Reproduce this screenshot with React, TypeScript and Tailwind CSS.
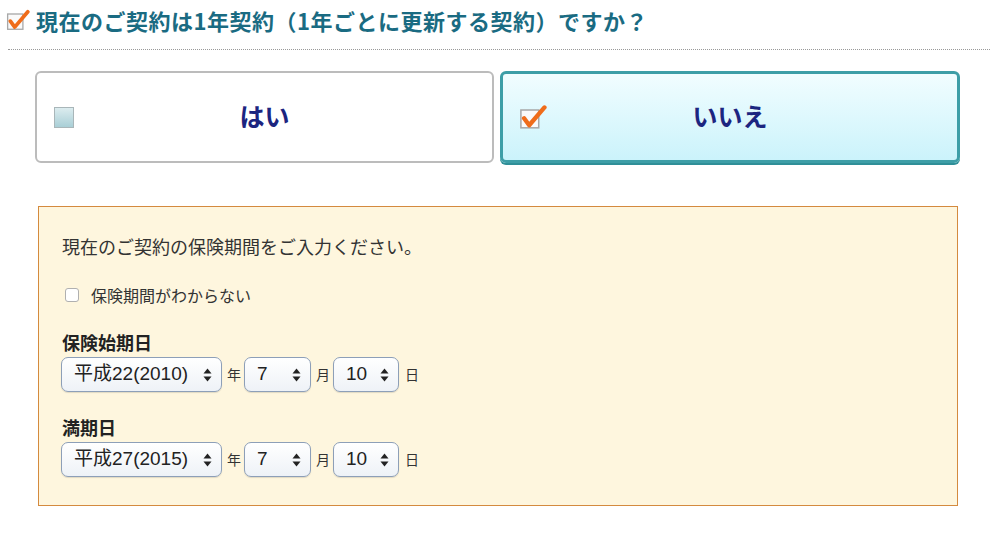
import React from 'react';

const JP = { fontFamily: '"Noto Sans CJK JP", "Noto Sans", sans-serif' };
const MIX = { fontFamily: '"Liberation Sans", "Noto Sans CJK JP", sans-serif' };

function CheckedIcon({ size = 22 }: { size?: number }) {
  return (
    <svg width={size} height={size} viewBox="0 0 22 22">
      <rect x="1.5" y="5.5" width="14" height="14" fill="#fafafa" stroke="#a8a8a8" strokeWidth="1.2" />
      <path d="M4 12 L8 17.5 L20 3.5" fill="none" stroke="#ef6c1a" strokeWidth="3.4" strokeLinecap="round" strokeLinejoin="round" />
    </svg>
  );
}

function SelectBox({ value, width }: { value: string; width: string }) {
  return (
    <div
      className={`${width} h-[35px] flex items-center justify-between pl-[12px] pr-[9px] rounded-[7px] border border-[#8d9fb8] bg-gradient-to-b from-white to-[#eef2f7] shadow-[0_1px_1px_rgba(0,0,0,0.12)]`}
    >
      <span className="text-[19px] text-[#222]" style={MIX}>{value}</span>
      <svg width="9" height="14" viewBox="0 0 9 14">
        <path d="M4.5 0.5 L8.5 5.5 L0.5 5.5 Z" fill="#222" />
        <path d="M4.5 13.5 L8.5 8.5 L0.5 8.5 Z" fill="#222" />
      </svg>
    </div>
  );
}

function DateRow({ era, month, day }: { era: string; month: string; day: string }) {
  return (
    <div className="flex items-center h-[35px]">
      <SelectBox value={era} width="w-[161px]" />
      <span className="ml-[5px] mr-[3px] text-[14px] text-[#333]" style={JP}>年</span>
      <SelectBox value={month} width="w-[67px]" />
      <span className="ml-[5px] mr-[3px] text-[14px] text-[#333]" style={JP}>月</span>
      <SelectBox value={day} width="w-[66px]" />
      <span className="ml-[6px] text-[14px] text-[#333]" style={JP}>日</span>
    </div>
  );
}

export default function App() {
  return (
    <div className="w-[998px] h-[534px] bg-white overflow-hidden" style={JP}>
      <div className="flex items-center h-[40px] pl-[6px]">
        <CheckedIcon size={24} />
        <h1 className="ml-[6px] text-[22px] font-bold text-[#1a6b82] tracking-[0.5px]">
          現在のご契約は1年契約（1年ごとに更新する契約）ですか？
        </h1>
      </div>
      <div className="mx-[8px] mt-[9px] border-t border-dotted border-[#999]" />

      <div className="flex gap-[6px] pl-[35px] mt-[21px]">
        <div className="w-[459px] h-[92px] flex items-center border-2 border-[#bcbcbc] rounded-[6px] bg-white pl-[17px]">
          <div className="w-[20px] h-[21px] border border-[#a9b6b9] bg-gradient-to-b from-[#dcecef] to-[#a9cfd6]" />
          <div className="flex-1 text-center text-[25px] font-bold text-[#1c2580] pr-[37px] pb-[2px]">はい</div>
        </div>
        <div className="w-[460px] h-[92px] flex items-center border-[3px] border-[#3d9ea7] rounded-[6px] bg-gradient-to-b from-[#f1fdff] to-[#cbf3fb] pl-[16px] shadow-[0_2px_0_#2f8f98]">
          <CheckedIcon size={28} />
          <div className="flex-1 text-center text-[25px] font-bold text-[#1c2580] pr-[44px] pb-[2px]">いいえ</div>
        </div>
      </div>

      <div className="ml-[38px] mt-[43px] w-[920px] h-[300px] border border-[#d48a3e] bg-[#fef6de] pt-[27px] pl-[22px]">
        <p className="text-[18px] leading-[24px] text-[#333] pl-[1px]">現在のご契約の保険期間をご入力ください。</p>
        <div className="mt-[25px] h-[24px] flex items-center pl-[4px]">
          <div className="w-[14px] h-[14px] rounded-[3px] border border-[#b0b0b0] bg-white" />
          <span className="ml-[12px] text-[16px] text-[#333]">保険期間がわからない</span>
        </div>
        <div className="mt-[23px] h-[24px] leading-[24px] text-[18px] font-bold text-[#222] pl-[1px]">保険始期日</div>
        <div className="mt-[3px]">
          <DateRow era="平成22(2010)" month="7" day="10" />
        </div>
        <div className="mt-[23px] h-[24px] leading-[24px] text-[18px] font-bold text-[#222] pl-[1px]">満期日</div>
        <div className="mt-[3px]">
          <DateRow era="平成27(2015)" month="7" day="10" />
        </div>
      </div>
    </div>
  );
}
